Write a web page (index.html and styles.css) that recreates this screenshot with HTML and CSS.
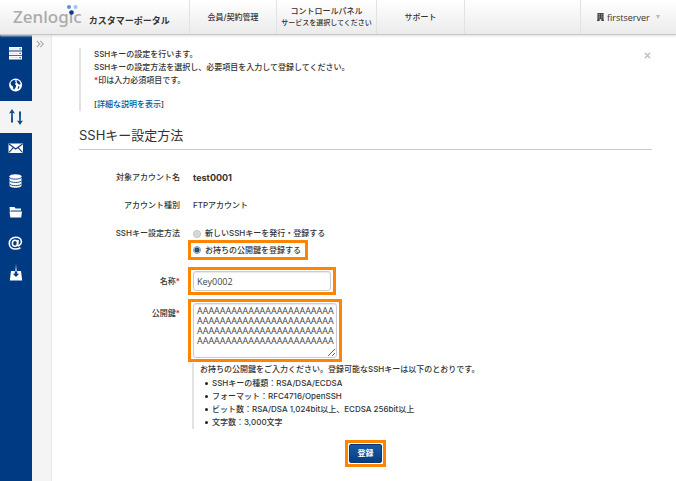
FILE: index.html
```html
<!DOCTYPE html>
<html lang="ja">
<head>
<meta charset="utf-8">
<meta name="viewport" content="width=device-width, initial-scale=1">
<title>Zenlogic カスタマーポータル</title>
<link rel="stylesheet" href="styles.css">
</head>
<body>
<header class="topbar">
  <a class="brand" href="#">
    <span class="logo">Zenlogic<svg class="logo-dots" viewBox="0 0 14 12" aria-hidden="true"><circle cx="3" cy="3" r="2" fill="#5b8fdc"/><circle cx="9.500" cy="3" r="2" fill="#9cc4f4"/><circle cx="5.500" cy="8.500" r="2.300" fill="#0d3a86"/></svg></span>
    <span class="brand-name">カスタマーポータル</span>
  </a>
  <nav class="topnav">
    <a href="#">会員/契約管理</a>
    <a href="#" class="wide">コントロールパネル<small>サービスを選択してください</small></a>
    <a href="#">サポート</a>
  </nav>
  <button type="button" class="account">
    <svg class="building" viewBox="0 0 8 9" aria-hidden="true"><path fill="#444" fill-rule="evenodd" d="M.5 0h7v8H8v1H5V7H3v2H0V8h.5zM2 1v1h1V1zm3 0v1h1V1zM2 3v1h1V3zm3 0v1h1V3zM2 5v1h1V5zm3 0v1h1V5z"/></svg>
    firstserver
    <svg class="caret" viewBox="0 0 4 4" aria-hidden="true"><path fill="#bbb" d="M0 0h4L2 4z"/></svg>
  </button>
</header>
<div class="page">
  <nav class="sidebar">
    <a href="#" aria-label="サーバー"><svg viewBox="0 0 32 32"><path fill="#fff" d="M9 10h13v3.600H9zm0 4.400h13V18H9zm0 4.400h13v3.600H9z"/><path fill="#003a82" d="M19.500 11.300h1.200v1.200h-1.200zm0 4.400h1.200v1.200h-1.200zm0 4.400h1.200v1.200h-1.200z"/><path stroke="#b4c6de" stroke-width=".5" d="M10 12h8M10 16.300h8M10 20.600h8"/></svg></a>
    <a href="#" aria-label="ドメイン"><svg viewBox="0 0 32 32"><circle cx="15.600" cy="16" r="6.500" fill="#fff"/><path fill="#003a82" d="M10.500 14.500c.4-2 1.700-3.200 3.500-3.600l1.800.7-.8 1.400 1.200.5-1.300 1.600 1.300 1.300-.6 2.200-1.300 2-1-.4-.3-2.600-1.700-1.300zM16.500 11l2.300.8 1.700 2.300-.3 1.700-1.800-.5-1.500-1.600zm1.600 6.300 1.500.4-1 2-.9.200z"/></svg></a>
    <a href="#" class="active" aria-label="ファイル転送" aria-current="page"><svg viewBox="0 0 32 32"><g fill="#0f4d8b"><path d="M12 8 15 12.500l-2.200-.6.200 9.600h-2l.2-9.600-2.200.6z"/><path d="M20 24 17 19.500l2.200.6-.2-9.600h2l-.2 9.600 2.200-.6z"/></g></svg></a>
    <a href="#" aria-label="メール"><svg viewBox="0 0 32 32"><path fill="#fff" d="M8.500 10.500h14.500v9.500H8.500z"/><path fill="none" stroke="#003a82" stroke-width="1.100" d="m9 11 6.700 5 6.800-5M9 19.500l4.300-4.800m9.200 4.800-4.300-4.800"/></svg></a>
    <a href="#" aria-label="データベース"><svg viewBox="0 0 32 32"><path fill="#fff" d="M9.500 11.500v9c0 3 12 3 12 0v-9z"/><ellipse cx="15.500" cy="11.500" rx="6" ry="2.300" fill="#fff"/><path fill="none" stroke="#003a82" stroke-width=".9" d="M9.300 12.200c1 2.600 11.400 2.600 12.400 0M9.300 15.500c1 2.600 11.400 2.600 12.400 0M9.300 18.700c1 2.600 11.400 2.600 12.400 0"/></svg></a>
    <a href="#" aria-label="ファイル"><svg viewBox="0 0 32 32"><path fill="#fff" d="M9.500 10h5l1 1.500h5.500v2H11l-1 1zM9.500 14.500H22l-.8 6H10.300z"/></svg></a>
    <a href="#" aria-label="アドレス"><svg viewBox="0 0 32 32"><g fill="none" stroke="#fff" stroke-width="1.600"><ellipse cx="15" cy="14.300" rx="2.600" ry="3"/><path d="m18.200 11-.8 4.800c-.2 2.500 4-.2 4-2.800 0-3-2.600-4.800-5.700-4.800-4 0-6.400 2.800-6.400 6.200 0 3.600 2.700 5.600 6.200 5.600 2 0 3.600-.5 4.900-1.300"/></g></svg></a>
    <a href="#" aria-label="インストール"><svg viewBox="0 0 32 32"><path fill="#fff" d="M11 10h10l1.200 9.500H9.800z"/><path fill="#003a82" d="M14.800 10h2.400v2.800h2L16 16l-3.200-3.200h2z"/><path fill="#fff" d="m16 3 .7 7.500h-1.400z"/></svg></a>
  </nav>
  <aside class="rail">
    <button type="button" aria-label="メニューを開く"><svg viewBox="0 0 8 8"><path fill="none" stroke="#aaa" stroke-width="1.100" d="m.8.800 3 3.200-3 3.200M4.300.800l3 3.200-3 3.200"/></svg></button>
  </aside>
  <main class="content">
    <div class="notice">
      <div class="notice-text">
        <p>SSHキーの設定を行います。<br>SSHキーの設定方法を選択し、必要項目を入力して登録してください。<br><span class="req">*</span>印は入力必須項目です。</p>
        <p class="more">[<a href="#">詳細な説明を表示</a>]</p>
      </div>
      <button type="button" class="close" aria-label="閉じる"><svg viewBox="0 0 8 8"><path stroke="#c4c4c4" stroke-width="1.700" d="m1 1 6 6M7 1 1 7"/></svg></button>
    </div>
    <h1>SSHキー設定方法</h1>
    <form>
      <div class="row">
        <span class="label">対象アカウント名</span>
        <strong class="plain account-id">test0001</strong>
      </div>
      <div class="row">
        <span class="label">アカウント種別</span>
        <span class="plain">FTPアカウント</span>
      </div>
      <div class="row methods" role="radiogroup" aria-labelledby="method">
        <span class="label" id="method">SSHキー設定方法</span>
        <div>
          <label class="choice plain"><input type="radio" name="method">新しいSSHキーを発行・登録する</label>
          <label class="choice mark"><input type="radio" name="method" checked>お持ちの公開鍵を登録する</label>
        </div>
      </div>
      <div class="row name-row">
        <label class="label" for="name">名称<span class="req">*</span></label>
        <div class="mark"><input class="field" id="name" type="text" value="Key0002"></div>
      </div>
      <div class="row key-row">
        <label class="label" for="key">公開鍵<span class="req">*</span></label>
        <div>
          <div class="mark"><textarea class="field" id="key" rows="4">AAAAAAAAAAAAAAAAAAAAAAAA
AAAAAAAAAAAAAAAAAAAAAAAA
AAAAAAAAAAAAAAAAAAAAAAAA
AAAAAAAAAAAAAAAAAAAAAAAA</textarea></div>
          <div class="help">
            <p>お持ちの公開鍵をご入力ください。登録可能なSSHキーは以下のとおりです。</p>
            <ul>
              <li>SSHキーの種類：RSA/DSA/ECDSA</li>
              <li>フォーマット：RFC4716/OpenSSH</li>
              <li>ビット数：RSA/DSA 1,024bit以上、ECDSA 256bit以上</li>
              <li>文字数：3,000文字</li>
            </ul>
          </div>
        </div>
      </div>
      <div class="actions"><div class="mark"><button type="submit">登録</button></div></div>
    </form>
  </main>
</div>
</body>
</html>
```

FILE: styles.css
```css
* { box-sizing: border-box; }
body {
  margin: 0;
  min-height: 100vh;
  display: flex;
  flex-direction: column;
  background: #fff;
  color: #333;
  font: 500 8px/13px Inter, "Noto Sans CJK JP", sans-serif;
}
p, h1, ul { margin: 0; padding: 0; }
button, input, textarea { font: inherit; color: inherit; }
button { border: 0; padding: 0; background: none; cursor: pointer; }
a { text-decoration: none; color: inherit; }
svg { display: block; }

.topbar {
  position: relative;
  display: flex;
  height: 35px;
  border-bottom: 1px solid #c8c8c8;
  background: linear-gradient(#fff, #ebebeb);
  box-shadow: 0 1px 2px #ddd;
}
.brand {
  display: flex;
  align-items: center;
  gap: 7px;
  width: 189px;
  padding-left: 13px;
}
.logo {
  position: relative;
  color: #aaa;
  font: 500 17px/34px "Noto Sans", sans-serif;
}
.logo-dots {
  position: absolute;
  top: 4px;
  right: 2px;
  width: 14px;
  height: 12px;
}
.brand-name {
  padding-top: 6px;
  font-size: 9px;
  font-weight: bold;
}
.topnav { display: flex; }
.topnav a {
  display: flex;
  flex-direction: column;
  align-items: center;
  justify-content: center;
  width: 87px;
  border-left: 1px solid #e2e2e2;
  line-height: 11px;
}
.topnav .wide { width: 100px; }
.topnav a:last-child { width: 89px; border-right: 1px solid #e2e2e2; }
.topnav small { font-size: 7px; }
.account {
  display: flex;
  align-items: center;
  gap: 3px;
  width: 96px;
  margin-left: auto;
  padding-left: 16px;
  border-left: 1px solid #e2e2e2;
  font: 9px/13px "Open Sans", sans-serif;
}
.building { width: 7px; height: 8px; }
.caret { width: 4px; height: 4px; margin-left: 3px; }

.page { display: flex; flex: 1; }
.sidebar { width: 32px; padding-top: 2px; background: #003a82; }
.sidebar a { display: block; }
.sidebar .active { background: #f4f4f4; }
.sidebar svg { width: 32px; height: 32px; }
.rail {
  width: 20px;
  padding: 4px 0 0 4px;
  border-right: 1px solid #e6e6e6;
  background: #f4f4f4;
}
.rail svg { width: 8px; height: 8px; }
.content { flex: 1; padding: 13px 24px 12px 27px; }

.notice { display: flex; justify-content: space-between; align-items: flex-start; }
.notice-text { padding-left: 13px; border-left: 2px solid #e2e2e2; }
.more { margin-top: 11px; }
.more a { color: #005a9f; }
.close { padding: 4px 1px; }
.close svg { width: 7px; height: 7px; }
.req { color: #e00000; }

h1 {
  margin: 14px 0 21px;
  padding-bottom: 3px;
  border-bottom: 1px solid #ccc;
  font-size: 13px;
  font-weight: normal;
  line-height: 21px;
}
.row {
  display: grid;
  grid-template-columns: 101px 1fr;
  column-gap: 8px;
  margin-bottom: 15px;
}
.label { text-align: right; }
.plain { padding-left: 5px; }
.account-id { font-size: 9px; }
.mark {
  width: fit-content;
  padding: 1px 2px;
  border: 3px solid #ff8400;
}
.methods { margin-bottom: 7px; }
.choice { display: flex; align-items: center; gap: 4px; }
.choice.mark { height: 20px; padding-right: 4px; }
.choice input {
  appearance: none;
  width: 8px;
  height: 8px;
  margin: 0;
  border: 1px solid #bbb;
  border-radius: 50%;
  background: radial-gradient(#ccc, #eee);
}
.choice input:checked {
  border-color: #8996a3;
  background: radial-gradient(#0a6c9c 0 1px, #123a59 2px, #e6eef3 3px);
}
.field {
  display: block;
  padding: 2px 3px;
  border: 1px solid #ccc;
  border-radius: 3px;
  background: #fff;
  color: #444;
  font: 9px/13px "Open Sans", sans-serif;
  box-shadow: inset 0 1px 1px #e8e8e8;
}
.name-row { margin-bottom: 4px; }
.name-row .label { padding-top: 8px; }
.name-row .field { width: 138px; height: 20px; }
.key-row { margin-bottom: 11px; }
.key-row .label { padding-top: 8px; }
.key-row .field {
  width: 144px;
  height: 55px;
  overflow: hidden;
  line-height: 10px;
  white-space: pre;
  resize: both;
}
.help {
  margin: 1px 0 0 4px;
  padding-left: 6px;
  border-left: 2px solid #e2e2e2;
}
.help ul { padding: 1px 0 0 5px; list-style: none; }
.help li { display: flex; align-items: center; gap: 4px; }
.help li::before {
  content: "";
  width: 3px;
  height: 3px;
  border-radius: 50%;
  background: #222;
}
.actions { display: flex; justify-content: center; }
.actions .mark { padding: 1px; }
.actions button {
  display: block;
  width: 33px;
  height: 19px;
  border: 1px solid #0b3975;
  border-radius: 2px;
  background: linear-gradient(#1959a5, #073d83);
  color: #fff;
  font-weight: bold;
  line-height: 17px;
}
```
